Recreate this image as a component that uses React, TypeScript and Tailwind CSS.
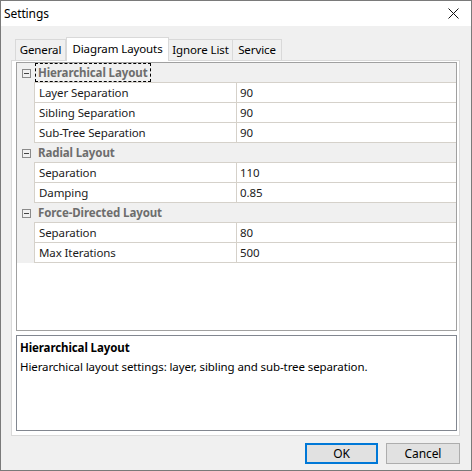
import React from 'react'

const font = { fontFamily: '"Noto Sans", "Open Sans", sans-serif' }

interface Prop {
  name: string
  value: string
}

interface Category {
  title: string
  props: Prop[]
}

const categories: Category[] = [
  {
    title: 'Hierarchical Layout',
    props: [
      { name: 'Layer Separation', value: '90' },
      { name: 'Sibling Separation', value: '90' },
      { name: 'Sub-Tree Separation', value: '90' },
    ],
  },
  {
    title: 'Radial Layout',
    props: [
      { name: 'Separation', value: '110' },
      { name: 'Damping', value: '0.85' },
    ],
  },
  {
    title: 'Force-Directed Layout',
    props: [
      { name: 'Separation', value: '80' },
      { name: 'Max Iterations', value: '500' },
    ],
  },
]

const tabs = [
  { label: 'General', w: 'w-[51px]' },
  { label: 'Diagram Layouts', w: 'w-[103px]', active: true },
  { label: 'Ignore List', w: 'w-[65px]' },
  { label: 'Service', w: 'w-[50px]' },
]

const MinusBox = () => (
  <div className="w-[9px] h-[9px] border border-[#8a8a8a] bg-[#f0f0f0] flex items-center justify-center">
    <div className="w-[5px] h-px bg-[#444]" />
  </div>
)

const CategoryRow: React.FC<{ title: string; focused?: boolean }> = ({ title, focused }) => (
  <div className="flex h-[20px] bg-[#f0f0f0]">
    <div className="w-[17px] flex items-center justify-center pl-[1px]">
      <MinusBox />
    </div>
    <div className="flex-1 flex items-center border-b border-[#d5d1ca] pl-[1px]">
      <span
        className={
          'font-bold text-[#6d6d6d] px-[2px] leading-[17px] ' +
          (focused ? 'border border-dashed border-black' : 'border border-transparent')
        }
      >
        {title}
      </span>
    </div>
  </div>
)

const PropRow: React.FC<Prop> = ({ name, value }) => (
  <div className="flex h-[20px]">
    <div className="w-[17px] bg-[#f0f0f0]" />
    <div className="w-[203px] flex items-center border-l border-b border-r border-[#d5d1ca] pl-[4px] text-[#1b1b1b]">
      {name}
    </div>
    <div className="flex-1 flex items-center border-b border-[#d5d1ca] pl-[3px] text-[#1b1b1b]">{value}</div>
  </div>
)

export default function App() {
  return (
    <div
      className="w-[472px] h-[471px] border border-[#7a7a7a] bg-[#f0f0f0] flex flex-col text-[11.5px] tracking-[-0.1px] text-black"
      style={font}
    >
      {/* title bar */}
      <div className="h-[25px] bg-white flex items-center justify-between pl-[3px] pr-[10px] text-[12px]">
        <span>Settings</span>
        <svg width="11" height="11" viewBox="0 0 11 11" className="mr-[2px]">
          <path d="M0.5 0.5 L10.5 10.5 M10.5 0.5 L0.5 10.5" stroke="#111" strokeWidth="1" />
        </svg>
      </div>

      <div className="flex-1 flex flex-col pl-[10px] pr-[11px] pt-[11px]">
        {/* tabs */}
        <div className="h-[23px] flex items-end pl-[4px]">
          {tabs.map((t) =>
            t.active ? (
              <div
                key={t.label}
                className={`${t.w} h-[24px] mb-[-1px] relative z-10 bg-white border border-b-0 border-[#d9d9d9] flex items-center justify-center pb-[2px]`}
              >
                {t.label}
              </div>
            ) : (
              <div
                key={t.label}
                className={`${t.w} h-[21px] bg-[#f0f0f0] border border-b-0 border-[#d9d9d9] flex items-center justify-center pb-[1px] -ml-px first:ml-0`}
              >
                {t.label}
              </div>
            )
          )}
        </div>

        {/* tab page */}
        <div className="h-[376px] border border-[#d9d9d9] bg-white pl-[4px] pr-[2px] pt-[1px] pb-[4px] flex flex-col">
          {/* property grid */}
          <div className="h-[269px] border border-[#a0a0a0] bg-white flex flex-col">
            {categories.map((c, i) => (
              <React.Fragment key={c.title}>
                <CategoryRow title={c.title} focused={i === 0} />
                {c.props.map((p) => (
                  <PropRow key={c.title + p.name} name={p.name} value={p.value} />
                ))}
              </React.Fragment>
            ))}
          </div>

          {/* description */}
          <div className="mt-[4px] flex-1 border border-[#828790] bg-white px-[3px] pt-[2px]">
            <div className="font-bold leading-[20px]">Hierarchical Layout</div>
            <div className="leading-[18px]">Hierarchical layout settings: layer, sibling and sub-tree separation.</div>
          </div>
        </div>

        {/* buttons */}
        <div className="mt-[7px] flex justify-end gap-[8px]">
          <button className="w-[73px] h-[21px] bg-[#e1e1e1] border-2 border-[#0078d7] flex items-center justify-center text-[12px]">
            OK
          </button>
          <button className="w-[74px] h-[21px] bg-[#e1e1e1] border border-[#adadad] flex items-center justify-center text-[12px]">
            Cancel
          </button>
        </div>
      </div>
    </div>
  )
}
